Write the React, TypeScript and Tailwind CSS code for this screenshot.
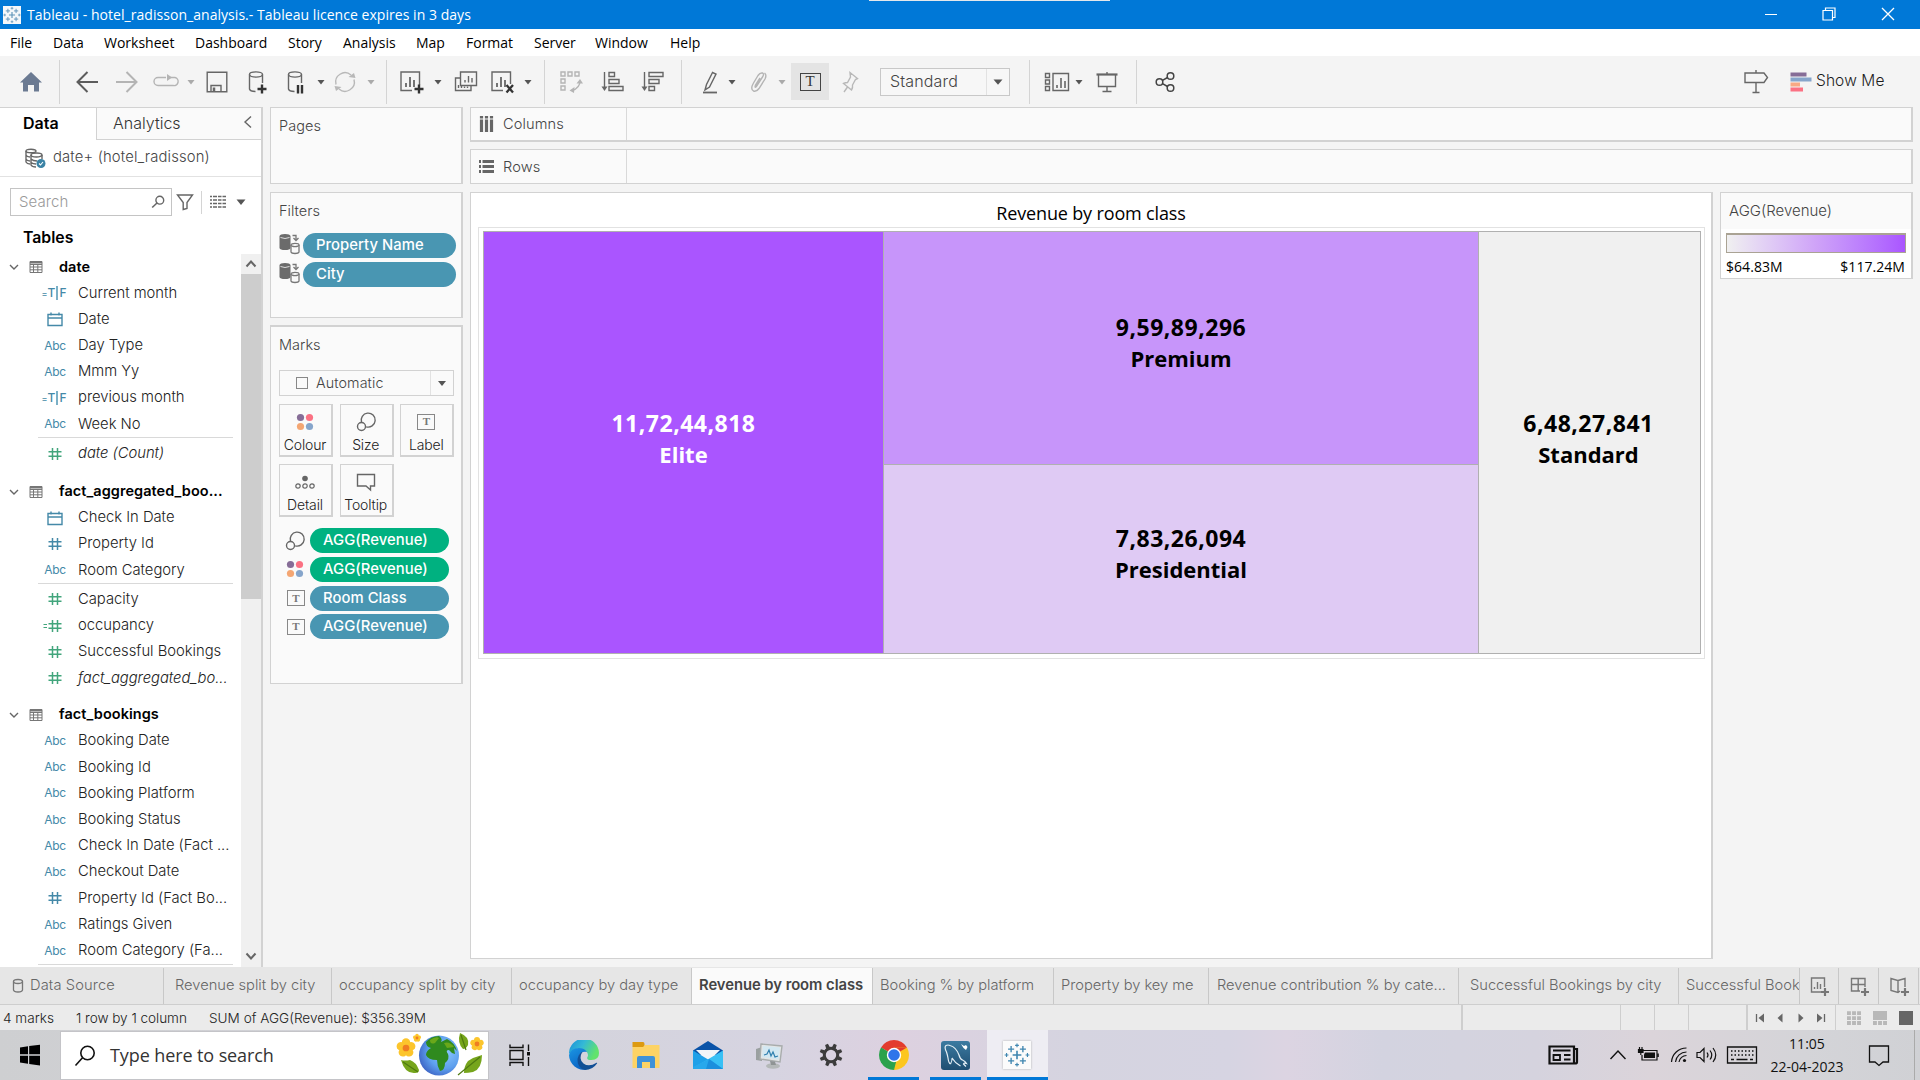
import React from 'react';

type IconProps = { s?: number; c?: string; w?: number; className?: string; children: React.ReactNode };

/* Drawing surface whose origin is the centre of the icon. */
function Ic({ s = 24, c = '#666', w = 1.4, className = '', children }: IconProps) {
  return (
    <svg width={s} height={s} viewBox={`${-s / 2} ${-s / 2} ${s} ${s}`} fill="none" stroke={c} strokeWidth={w} className={'block shrink-0 overflow-visible ' + className}>
      {children}
    </svg>
  );
}

function Tri({ c = '#555' }: { c?: string }) {
  return (
    <Ic s={8}>
      <path d="M-3.5 -2H3.5L0 2.6z" fill={c} stroke="none" />
    </Ic>
  );
}

function Cell({ className, children }: { className: string; children: React.ReactNode }) {
  return <div className={'flex h-full shrink-0 items-center justify-center ' + className}>{children}</div>;
}

function Sep({ className = '' }: { className?: string }) {
  return <div className={'h-[44px] w-px shrink-0 bg-[#d4d4d4] ' + className} />;
}

function Plus({ x, y, r, c, w }: { x: number; y: number; r: number; c: string; w: number }) {
  return <path d={`M${x - r} ${y}H${x + r}M${x} ${y - r}V${y + r}`} stroke={c} strokeWidth={w} />;
}

function TableauMark({ k, c }: { k: number; c: string }) {
  return (
    <g>
      <Plus x={0} y={0} r={4.6 * k} c={c} w={1.7 * k} />
      <Plus x={-6.2 * k} y={-6.2 * k} r={3.2 * k} c={c} w={1.4 * k} />
      <Plus x={6.2 * k} y={-6.2 * k} r={3.2 * k} c={c} w={1.4 * k} />
      <Plus x={-6.2 * k} y={6.2 * k} r={3.2 * k} c={c} w={1.4 * k} />
      <Plus x={6.2 * k} y={6.2 * k} r={3.2 * k} c={c} w={1.4 * k} />
      <Plus x={0} y={-10.2 * k} r={2 * k} c={c} w={1.2 * k} />
      <Plus x={0} y={10.2 * k} r={2 * k} c={c} w={1.2 * k} />
      <Plus x={-11 * k} y={0} r={2 * k} c={c} w={1.2 * k} />
      <Plus x={11 * k} y={0} r={2 * k} c={c} w={1.2 * k} />
    </g>
  );
}

const menus = [
  ['File', 'w-[43px]'],
  ['Data', 'w-[51px]'],
  ['Worksheet', 'w-[91px]'],
  ['Dashboard', 'w-[93px]'],
  ['Story', 'w-[55px]'],
  ['Analysis', 'w-[73px]'],
  ['Map', 'w-[50px]'],
  ['Format', 'w-[68px]'],
  ['Server', 'w-[61px]'],
  ['Window', 'w-[75px]'],
  ['Help', 'w-[40px]'],
];

function TitleBar() {
  return (
    <header className="flex h-[29px] items-center bg-[#0078d7] text-white">
      <div className="ml-[3px] flex h-[18px] w-[18px] items-center justify-center bg-[#f4f7fa]">
        <Ic s={18}>
          <TableauMark k={0.66} c="#5d93b8" />
        </Ic>
      </div>
      <span className="-mt-[1px] ml-[6px] w-[445px] whitespace-nowrap text-[14px] tracking-[0.04px]">Tableau - hotel_radisson_analysis.- Tableau licence expires in 3 days</span>
      <div className="ml-[397px] h-px w-[241px] self-start bg-[#e4e8ec]" />
      <div className="ml-auto flex items-center pb-[2px] pr-[25px]">
        <Ic s={14} c="#fff" w={1} className="mr-[44px]">
          <path d="M-6 .5H6" />
        </Ic>
        <Ic s={14} c="#fff" w={1.2} className="mr-[45px]">
          <path d="M-6 -3.5H3.5V6H-6zM-3.5 -4V-6H6V3.5H4" />
        </Ic>
        <Ic s={14} c="#fff" w={1.3}>
          <path d="M-6 -6L6 6M6 -6L-6 6" />
        </Ic>
      </div>
    </header>
  );
}

function Bars() {
  return <path d="M-4 5V1M0 5V-5M4 5V-2" strokeWidth={1.8} />;
}

function Toolbar() {
  return (
    <div className="flex h-[51px] items-center">
      <Cell className="w-[61px]">
        <Ic>
          <path d="M-11 .5L0 -10L11 .5H8V9.5H3V3H-3V9.5H-8V.5z" fill="#6b7a92" stroke="none" />
        </Ic>
      </Cell>
      <Sep className="-ml-[2px]" />
      <Cell className="ml-[7px] w-[40px]">
        <Ic c="#5c5c5c" w={2}>
          <path d="M11 0H-9.5M.5 -10L-9.5 0L.5 10" />
        </Ic>
      </Cell>
      <Cell className="w-[40px]">
        <Ic c="#b4b4b4" w={2}>
          <path d="M-11 0H9.5M-.5 -10L9.5 0L-.5 10" />
        </Ic>
      </Cell>
      <Cell className="w-[36px]">
        <Ic c="#b4b4b4">
          <path d="M1 -4.5H-7A4 4 0 0 0 -7 3.5H8A4 4 0 0 0 10 -4.5H2" />
          <path d="M2 -8L7 -4.5L2 -1z" fill="#b4b4b4" stroke="none" />
        </Ic>
      </Cell>
      <Cell className="w-[16px]"><Tri c="#aaa" /></Cell>
      <Cell className="w-[36px]">
        <Ic>
          <path d="M-9.8 -9.8H9.8V9.8H-9.8zM-6 9.5V3.5H4V9.5" />
          <path d="M-3 5.5V9.5" strokeWidth={2.5} />
        </Ic>
      </Cell>
      <Cell className="ml-[2px] w-[40px]">
        <Ic>
          <ellipse cx="-1" cy="-7.5" rx="6.5" ry="2.6" />
          <path d="M-7.5 -7.5V7Q-7 9.5 -1.5 9.5M5.5 -7.5V1" />
          <path d="M5 2.5V11.5M.5 7H9.5" stroke="#333" strokeWidth={2.4} />
        </Ic>
      </Cell>
      <Cell className="w-[38px]">
        <Ic>
          <ellipse cx="-1" cy="-7.5" rx="6.5" ry="2.6" />
          <path d="M-7.5 -7.5V7Q-7 9.5 -1.5 9.5M5.5 -7.5V1" />
          <path d="M2 3V11.5M6 3V11.5" stroke="#333" strokeWidth={2.4} />
        </Ic>
      </Cell>
      <Cell className="w-[12px]"><Tri /></Cell>
      <Cell className="w-[36px]">
        <Ic c="#b8b8b8">
          <path d="M-9 2.5A9.3 9.3 0 0 1 6 -7M9 -2.5A9.3 9.3 0 0 1 -6 7" />
          <path d="M10.5 -4L3.5 -5L9 -9zM-10.5 4L-3.5 5L-9 9z" fill="#b8b8b8" stroke="none" />
        </Ic>
      </Cell>
      <Cell className="w-[16px]"><Tri c="#aaa" /></Cell>
      <Sep className="ml-[7px]" />
      <Cell className="ml-[4px] w-[40px]">
        <Ic>
          <path d="M1 8.5H-10V-10H8.5V3" />
          <g transform="translate(-1 0)"><Bars /></g>
          <path d="M8 2.5V11.5M3.5 7H12.5" stroke="#333" strokeWidth={2.4} />
        </Ic>
      </Cell>
      <Cell className="w-[14px]"><Tri /></Cell>
      <Cell className="ml-px w-[40px]">
        <Ic>
          <path d="M-5.5 -10H10.5V3.5H-5.5zM-6 -4H-10.5V8.5H5V4" />
          <path d="M-1 .5V-2M2.5 .5V-6M6 .5V-4M-7.5 6V3M-4.5 6V3M-1.5 6V4.5M1.5 6V4.5" />
        </Ic>
      </Cell>
      <Cell className="w-[32px]">
        <Ic>
          <path d="M1 8.5H-10V-10H8.5V2" />
          <g transform="translate(-1 0)"><Bars /></g>
          <path d="M4.5 3L11 10.5M11 3L4.5 10.5" stroke="#333" strokeWidth={2.3} />
        </Ic>
      </Cell>
      <Cell className="ml-[2px] w-[16px]"><Tri /></Cell>
      <Sep className="ml-[8px]" />
      <Cell className="ml-[6px] w-[40px]">
        <Ic c="#b4b4b4">
          <path d="M-10 -10h4v4h-4zM-3 -10h4v4h-4zM4 -10h4v4h-4zM-10 -3h4v4h-4zM-10 4h4v4h-4zM9 -1Q9 6 1 8.5" />
          <path d="M5.5 1.5L9 -3L12 1.5zM3.5 5L-1.5 8.5L3 11z" fill="#b4b4b4" stroke="none" />
        </Ic>
      </Cell>
      <Cell className="ml-[2px] w-[40px]">
        <Ic>
          <path d="M-8.5 -10V6" />
          <path d="M-11.5 4.5L-8.5 9L-5.5 4.5z" fill="#666" stroke="none" />
          <path d="M-4 -9.5h5.5v4h-5.5zM-4 -2.5h10v4h-10zM-4 4.5h14v4h-14z" />
        </Ic>
      </Cell>
      <Cell className="w-[40px]">
        <Ic>
          <path d="M-8.5 -10V6" />
          <path d="M-11.5 4.5L-8.5 9L-5.5 4.5z" fill="#666" stroke="none" />
          <path d="M-4 -9.5h14v4h-14zM-4 -2.5h10v4h-10zM-4 4.5h5.5v4h-5.5z" />
        </Ic>
      </Cell>
      <Sep className="ml-[8px]" />
      <Cell className="ml-[10px] w-[36px]">
        <Ic>
          <path d="M2.5 -9.5L-3.5 2.5L-5 8L-.5 5L6 -8zM-5 8L-4 5" />
          <path d="M-7 10.5H7" strokeWidth={1.8} />
        </Ic>
      </Cell>
      <Cell className="w-[8px]"><Tri /></Cell>
      <Cell className="ml-[5px] w-[36px]">
        <Ic c="#b4b4b4">
          <path d="M-3 5L3.5 -5Q5.5 -8 3.5 -9Q1 -9.5 -1 -6.5L-5.5 1Q-9 7 -5.5 9Q-2.5 10 0 6.5L6 -3Q8 -7 5.5 -9M-3 5Q-4.5 6 -3.5 3L1 -4" />
        </Ic>
      </Cell>
      <Cell className="w-[10px]"><Tri c="#aaa" /></Cell>
      <div className="ml-[4px] flex h-[37px] w-[38px] shrink-0 items-center justify-center bg-[#e4e4e4]">
        <div className="flex h-[18px] w-[21px] items-center justify-center border-[1.5px] border-[#444] font-['Liberation_Serif'] text-[15px] leading-none text-[#333]">T</div>
      </div>
      <Cell className="w-[42px]">
        <Ic c="#b8b8b8">
          <path d="M0 -9.5L7.5 -3.5L5.5 -2.5L2.5 3Q3 6 1.5 8L-6.5 1.5Q-4.5 .5 -2.5 .5L.5 -5zM-2.5 5L-6 10" />
        </Ic>
      </Cell>
      <div className="ml-[9px] flex h-[28px] w-[130px] shrink-0 items-center border border-[#c8c8c8] bg-[#f7f7f7]">
        <span className="-mt-[1px] ml-[9px] w-[96px] text-[16px] tracking-[0.15px] text-[#444]">Standard</span>
        <div className="flex h-full w-[22px] items-center justify-center border-l border-[#e2e2e2]"><Ic s={8}><path d="M-4.5 -2.5H4.5L0 2.8z" fill="#555" stroke="none" /></Ic></div>
      </div>
      <Sep className="ml-[19px]" />
      <Cell className="ml-[9px] w-[36px]">
        <Ic>
          <path d="M-11.5 -8.5h4v4h-4zM-11.5 -2h4v4h-4zM-11.5 4.5h4v4h-4zM-4 -8.5H11.5V8.5H-4z" />
          <path d="M0 6V3M4 6V-4M8 6V-1" strokeWidth={1.6} />
        </Ic>
      </Cell>
      <Cell className="w-[8px]"><Tri /></Cell>
      <Cell className="ml-[4px] w-[40px]">
        <Ic>
          <path d="M-10.5 -7.5H10.5" strokeWidth={2.2} />
          <path d="M-8.5 -7V4.5H8.5V-7M0 -10V-8M0 4.5V9.5M-4.5 9.5H4.5" />
        </Ic>
      </Cell>
      <Sep className="ml-[9px]" />
      <Cell className="ml-[8px] w-[40px]">
        <Ic c="#444" w={1.5}>
          <circle cx="-5.5" cy="0" r="3.3" />
          <circle cx="5.5" cy="-6" r="3.3" />
          <circle cx="5.5" cy="6" r="3.3" />
          <path d="M-2.5 -1.6L2.5 -4.5M-2.5 1.6L2.5 4.5" />
        </Ic>
      </Cell>
      <div className="ml-auto flex items-center pr-[33px]">
        <Ic s={24} className="mr-[22px]">
          <path d="M-11 -9H8L11.5 -4.5L8 .5H-11zM0 -12V-9M0 .5V10.5M-3.5 10.5H3.5" />
        </Ic>
        <Ic s={22} className="mr-[5px]">
          <g stroke="none">
            <rect x="-10.5" y="-9.5" width="16" height="4" fill="#866d97" />
            <rect x="-10.5" y="-4.5" width="21" height="4" fill="#86a5cb" />
            <rect x="-10.5" y=".5" width="9.5" height="4" fill="#f8a984" />
            <rect x="-10.5" y="5.5" width="12.5" height="4" fill="#fb7183" />
          </g>
        </Ic>
        <span className="-ml-px -mt-[1px] w-[71px] whitespace-nowrap text-[15.5px] tracking-[0.1px] text-[#1c1c1c]">Show Me</span>
      </div>
    </div>
  );
}

type Kind = 'abc' | 'tf' | 'cal' | 'num' | 'gnum' | 'egnum';

function FieldIcon({ kind }: { kind: Kind }) {
  if (kind === 'abc') return <span className="text-[12px] font-normal tracking-[-0.3px] text-[#4489a8]">Abc</span>;
  if (kind === 'tf')
    return (
      <span className="-ml-[2px] flex items-center text-[12px] font-medium leading-none text-[#4489a8]">
        <span className="text-[9px]">=</span>T<span className="mx-px h-[14px] w-[2px] bg-[#7bb0c6]" />F
      </span>
    );
  if (kind === 'cal')
    return (
      <Ic s={18} c="#4489a8">
        <path d="M-7 -4.5H7V6.5H-7zM-7 -1H7M-4 -6.5V-3.5M4 -6.5V-3.5" />
      </Ic>
    );
  const c = kind === 'num' ? '#4489a8' : '#42a57c';
  return (
    <Ic s={18} c={c} w={1.5}>
      <path d="M-2.5 -6V6M2.5 -6V6M-6.5 -2.2H6.5M-6.5 2.2H6.5" />
      {kind === 'egnum' && <path d="M-11.5 -1.5H-8M-11.5 1.5H-8" strokeWidth={1.2} />}
    </Ic>
  );
}

type Row = { k: Kind; t: string; i?: boolean };

function FieldRow({ k, t, i }: Row) {
  return (
    <div className="flex h-[26.24px] items-center">
      <div className="ml-[30px] flex w-[50px] items-center justify-center">
        <FieldIcon kind={k} />
      </div>
      <span className={'-mt-[1px] ml-[-2px] whitespace-nowrap text-[14.8px] tracking-[-0.02px] text-[#222] ' + (i ? 'italic' : '')}>{t}</span>
    </div>
  );
}

function GroupHead({ t }: { t: string }) {
  return (
    <div className="flex h-[26px] items-center">
      <Ic s={10} c="#666" className="ml-[9px]">
        <path d="M-4 -2L0 2L4 -2" />
      </Ic>
      <Ic s={14} c="#777" w={1} className="ml-[10px]">
        <path d="M-6 -5.5H6V5.5H-6zM-6 -2.5H6M-6 0H6M-6 2.8H6M-2.5 -2.5V5.5M1.8 -2.5V5.5" />
        <path d="M-6 -4.5H6" strokeWidth={2} />
      </Ic>
      <span className="-mt-[1px] ml-[16px] whitespace-nowrap text-[14.5px] font-semibold tracking-[0.05px] text-black">{t}</span>
    </div>
  );
}

const Line = () => <div className="mb-[2px] ml-[38px] h-px w-[195px] bg-[#d9d9d9]" />;

function DataPane() {
  return (
    <aside className="flex w-[263px] shrink-0 flex-col border-r-2 border-t border-[#d2d2d2] bg-white">
      <div className="flex h-[32px] shrink-0">
        <div className="w-[96px] pl-[23px] pt-[3px] text-[16px] font-semibold text-black">Data</div>
        <div className="flex grow justify-between border-b border-l border-[#d2d2d2] bg-[#fafafa] pl-[16px] pr-[8px] pt-[3px] text-[16px] text-[#333]">
          Analytics
          <Ic s={10} className="mt-[6px]">
            <path d="M3 -5.5L-3 0L3 5.5" />
          </Ic>
        </div>
      </div>
      <div className="flex h-[37px] shrink-0 items-center border-b border-[#e2e2e2] pl-[25px]">
        <Ic s={20}>
          <ellipse cx="-4" cy="-7" rx="5" ry="1.8" />
          <path d="M-9 -7V4Q-8 6 -5 6M-9 -3Q-8 -1 -5 -1M-9 1Q-8 3 -5 3" />
          <ellipse cx="1.5" cy="-3" rx="5.5" ry="2" fill="#fff" />
          <path d="M-4 -3V7Q-3 9 1 9M7 -3V1M-4 1Q-2 3 2 3M-4 4.5Q-2 6 1 6" />
          <circle cx="6" cy="5.5" r="4.5" fill="#3b83a5" stroke="none" />
          <path d="M4 5.5L5.5 7L8 4" stroke="#fff" strokeWidth={1.1} />
        </Ic>
        <span className="-mt-[1px] ml-[8px] text-[14.8px] tracking-[0.15px] text-[#444]">date+ (hotel_radisson)</span>
      </div>
      <div className="mt-[11px] flex h-[28px] shrink-0 items-center">
        <div className="ml-[10px] flex h-[28px] w-[162px] items-center justify-between border border-[#c4c4c4] bg-white pl-[8px] pr-[7px]">
          <span className="text-[15px] tracking-[0.1px] text-[#9a9a9a]">Search</span>
          <Ic s={12}>
            <circle cx="1.8" cy="-1.8" r="3.9" />
            <path d="M-1 1L-5.8 5.5" strokeWidth={1.6} />
          </Ic>
        </div>
        <Ic s={16} className="ml-[5px]">
          <path d="M-7.5 -7H7.5L2 .5V6.5L-1.8 7.5V.5z" />
        </Ic>
        <div className="ml-[8px] h-[23px] w-px bg-[#d4d4d4]" />
        <Ic s={16} w={1.6} className="ml-[8px]">
          <path d="M-8 -5.5H-6M-5 -5.5H-1M0 -5.5H3.5M4.500 -5.5H8M-8 -2H-6M-5 -2H-1M0 -2H3.5M4.5 -2H8M-8 1.5H-6M-5 1.5H-1M0 1.5H3.5M4.5 1.5H8M-8 5H-6M-5 5H-1M0 5H3.5M4.5 5H8" />
        </Ic>
        <Ic s={10} className="ml-[10px]">
          <path d="M-4.5 -2.5H4.5L0 3z" fill="#555" stroke="none" />
        </Ic>
      </div>
      <div className="mt-[11px] h-[22px] shrink-0 pl-[23px] text-[15.8px] font-semibold leading-[22px] text-black">Tables</div>
      <div className="flex grow overflow-hidden pt-[5px]">
        <div className="w-[241px] shrink-0">
          <GroupHead t="date" />
          <FieldRow k="tf" t="Current month" />
          <FieldRow k="cal" t="Date" />
          <FieldRow k="abc" t="Day Type" />
          <FieldRow k="abc" t="Mmm Yy" />
          <FieldRow k="tf" t="previous month" />
          <FieldRow k="abc" t="Week No" />
          <Line />
          <FieldRow k="gnum" t="date (Count)" i />
          <div className="h-[12px]" />
          <GroupHead t="fact_aggregated_boo..." />
          <FieldRow k="cal" t="Check In Date" />
          <FieldRow k="num" t="Property Id" />
          <FieldRow k="abc" t="Room Category" />
          <Line />
          <FieldRow k="gnum" t="Capacity" />
          <FieldRow k="egnum" t="occupancy" />
          <FieldRow k="gnum" t="Successful Bookings" />
          <FieldRow k="gnum" t="fact_aggregated_bo..." i />
          <div className="h-[10.5px]" />
          <GroupHead t="fact_bookings" />
          <FieldRow k="abc" t="Booking Date" />
          <FieldRow k="abc" t="Booking Id" />
          <FieldRow k="abc" t="Booking Platform" />
          <FieldRow k="abc" t="Booking Status" />
          <FieldRow k="abc" t="Check In Date (Fact ..." />
          <FieldRow k="abc" t="Checkout Date" />
          <FieldRow k="num" t="Property Id (Fact Bo..." />
          <FieldRow k="abc" t="Ratings Given" />
          <FieldRow k="abc" t="Room Category (Fa..." />
          <Line />
        </div>
        <div className="flex grow flex-col items-center bg-[#f0f0f0]">
          <Ic s={20} w={2}>
            <path d="M-4.5 2.5L0 -2.5L4.5 2.5" />
          </Ic>
          <div className="h-[325px] w-full bg-[#cdcdcd]" />
          <Ic s={20} w={2} className="mt-auto">
            <path d="M-4.5 -3.5L0 1.5L4.5 -3.5" />
          </Ic>
        </div>
      </div>
    </aside>
  );
}

function SizeIcon() {
  return (
    <Ic s={20}>
      <path d="M-4.5 .2A7 7 0 1 1 .2 4.800" />
      <circle cx="-4.5" cy="4.5" r="4" />
    </Ic>
  );
}
function ColourIcon() {
  return (
    <Ic s={20}>
      <g stroke="none">
        <circle cx="-4.5" cy="-4.5" r="3.6" fill="#866d97" />
        <circle cx="4.5" cy="-4.5" r="3.6" fill="#fb7183" />
        <circle cx="-4.5" cy="4.5" r="3.6" fill="#f4a673" />
        <circle cx="4.5" cy="4.5" r="3.6" fill="#86a5cb" />
      </g>
    </Ic>
  );
}
function LabelIcon() {
  return (
    <div className="flex h-[16px] w-[18px] shrink-0 items-center justify-center border-[1.5px] border-[#888] font-['Liberation_Serif'] text-[11px] font-bold leading-none text-[#777]">T</div>
  );
}

function MarkButton({ label, children }: { label: string; children: React.ReactNode }) {
  return (
    <div className="flex h-[53px] w-[54px] flex-col items-center border border-b-2 border-r-2 border-[#d2d2d2] pr-px text-[14px] text-[#222]">
      <div className="flex h-[34px] items-center">{children}</div>
      <span className="-mt-[4px] tracking-[-0.15px]">{label}</span>
    </div>
  );
}

function Pill({ t, green }: { t: string; green?: boolean }) {
  return (
    <div className={'flex h-[25px] grow items-center rounded-full pl-[13px] text-[14.8px] font-medium text-white ' + (green ? 'bg-[#00b180]' : 'bg-[#4996b2]')}>
      <span className="tracking-[0.06px]">{t}</span>
    </div>
  );
}

function DbIcon() {
  return (
    <Ic s={22} c="#777" w={1.3}>
      <path d="M-10.5 -8V4Q-10 6 -5 6T.5 4V-8Q0 -10 -5 -10T-10.5 -8z" fill="#6b6b6b" stroke="none" />
      <path d="M-9.5 -6.5Q-5 -4.5 -.5 -6.5" stroke="#ddd" strokeWidth={1} />
      <path d="M1 1V8Q1.5 9.5 5 9.5T9 8V1" fill="#fafafa" />
      <ellipse cx="5" cy="1" rx="4" ry="1.6" fill="#fafafa" />
      <path d="M2.5 -8.5H6V-5M3.5 -6L6 -3.5L8.5 -6" />
    </Ic>
  );
}

function Cards() {
  return (
    <div className="ml-[7px] flex w-[193px] shrink-0 flex-col text-[14.5px] leading-[21px] text-[#444]">
      <section className="h-[77px] border border-r-2 border-[#d2d2d2] bg-[#fafafa] pl-[8px] pt-[7px] tracking-[0.1px]">Pages</section>
      <section className="mt-[8px] h-[126px] border border-r-2 border-[#d2d2d2] bg-[#fafafa] pl-[8px] pt-[7px]">
        Filters
        <div className="mt-[12px] flex gap-[2px] pr-[5px]">
          <DbIcon />
          <Pill t="Property Name" />
        </div>
        <div className="mt-[4px] flex gap-[2px] pr-[5px]">
          <DbIcon />
          <Pill t="City" />
        </div>
      </section>
      <section className="mt-[7px] h-[359px] border border-r-2 border-t-2 border-[#d2d2d2] bg-[#fafafa] pl-[8px] pt-[7px]">
        Marks
        <div className="mt-[15px] flex h-[26px] w-[175px] items-center border border-[#d2d2d2]">
          <div className="ml-[16px] h-[12px] w-[12px] border-[1.5px] border-[#888]" />
          <span className="-mt-[2px] ml-[8px] grow text-[14.3px] tracking-[0.1px]">Automatic</span>
          <div className="flex h-full w-[23px] items-center justify-center border-l border-[#e2e2e2]"><Ic s={8}><path d="M-4 -2H4L0 3z" fill="#555" stroke="none" /></Ic></div>
        </div>
        <div className="mt-[8px] grid w-[175px] grid-cols-3 gap-x-[7px] gap-y-[7px]">
          <MarkButton label="Colour"><ColourIcon /></MarkButton>
          <MarkButton label="Size"><SizeIcon /></MarkButton>
          <MarkButton label="Label"><LabelIcon /></MarkButton>
          <MarkButton label="Detail">
            <Ic s={20} w={1.2}>
              <circle cx="0" cy="-3.5" r="2.8" fill="#666" stroke="none" />
              <circle cx="-7" cy="4" r="2.2" />
              <circle cx="0" cy="4" r="2.2" />
              <circle cx="7" cy="4" r="2.2" />
            </Ic>
          </MarkButton>
          <MarkButton label="Tooltip">
            <Ic s={20}>
              <path d="M-8.5 -7.5H8.5V4H4.5V8L0 4H-8.5z" />
            </Ic>
          </MarkButton>
        </div>
        <div className="mt-[11px] flex w-[170px] flex-col gap-[3.8px] pl-[6px]">
          <div className="flex items-center gap-[5px]"><SizeIcon /><Pill t="AGG(Revenue)" green /></div>
          <div className="flex items-center gap-[5px]"><ColourIcon /><Pill t="AGG(Revenue)" green /></div>
          <div className="flex items-center gap-[5px] pl-[2px]"><LabelIcon /><Pill t="Room Class" /></div>
          <div className="flex items-center gap-[5px] pl-[2px]"><LabelIcon /><Pill t="AGG(Revenue)" /></div>
        </div>
      </section>
    </div>
  );
}

function Shelf({ label, className, children }: { label: string; className: string; children: React.ReactNode }) {
  return (
    <div className={'flex border border-r-2 border-[#d2d2d2] bg-[#fafafa] text-[14.6px] text-[#444] ' + className}>
      <div className="flex w-[156px] items-center border-r border-[#d9d9d9] pl-[7px]">
        {children}
        <span className="ml-[9px] mt-[2px] tracking-[0.1px]">{label}</span>
      </div>
    </div>
  );
}

function Mark({ value, name, className }: { value: string; name: string; className: string }) {
  return (
    <div className={'flex flex-col items-center justify-center font-["Open_Sans"] text-[22px] font-bold leading-[31px] ' + className}>
      <span className="text-[23px] tracking-[0.5px]">{value}</span>
      <span>{name}</span>
    </div>
  );
}

function Workspace() {
  return (
    <div className="ml-[7px] flex w-[1443px] shrink-0 flex-col">
      <Shelf label="Columns" className="h-[35px] border-b-2">
        <Ic s={16}>
          <path d="M-4.5 -4.5V8M.5 -4.5V8M5.5 -4.5V8" strokeWidth={3.2} />
          <path d="M-6.1 -6.8h3.2M-1.1 -6.8h3.2M3.9 -6.8h3.2" strokeWidth={2.4} />
        </Ic>
      </Shelf>
      <Shelf label="Rows" className="mt-[7px] h-[35px]">
        <Ic s={16}>
          <path d="M-3.5 -5.5H8M-3.5 -.5H8M-3.5 4.5H8" strokeWidth={2.8} />
          <path d="M-7 -5.5H-5M-7 -.5H-5M-7 4.5H-5" strokeWidth={2.8} />
        </Ic>
      </Shelf>
      <div className="mt-[8px] flex h-[767px] items-start justify-between">
        <section className="flex h-full w-[1243px] flex-col border border-r-2 border-[#d2d2d2] bg-white">
          <h1 className="h-[34px] text-center font-['Open_Sans'] text-[18px] font-normal leading-[41px] tracking-[-0.15px] text-black">Revenue by room class</h1>
          <div className="ml-[7px] h-[432px] w-[1227px] border border-[#e2e2e2] p-[3px] pb-[4px] pl-[4px]">
            <div className="flex h-full border border-[#b0b0b0]">
              <Mark value="11,72,44,818" name="Elite" className="w-[399px] bg-[#aa55ff] pb-[8px] text-white" />
              <div className="flex w-[596px] flex-col border-x border-[#b0b0b0] text-black">
                <Mark value="9,59,89,296" name="Premium" className="h-[233px] border-b border-[#b0b0b0] bg-[#c795fa] pb-[10px]" />
                <Mark value="7,83,26,094" name="Presidential" className="grow bg-[#dfcaf4] pb-[11px]" />
              </div>
              <Mark value="6,48,27,841" name="Standard" className="grow bg-[#f0f0f0] pb-[8px] pr-[2px] text-black" />
            </div>
          </div>
        </section>
        <section className="h-[87px] w-[193px] border border-r-2 border-[#d2d2d2] bg-white text-[15px]">
          <div className="h-[36px] bg-[#fafafa] pl-[8px] pt-[7px] text-[#444]">AGG(Revenue)</div>
          <div className="ml-[5px] mt-[4px] h-[20px] w-[180px] border border-t-2 border-[#aaa394] bg-gradient-to-r from-[#f0f0f0] via-[#cfa3f8] to-[#aa55ff]" />
          <div className="flex justify-between pl-[5px] pr-[6px] pt-[3px] font-['Open_Sans'] text-[14px] font-normal tracking-[0.05px] text-black">
            <span>$64.83M</span>
            <span>$117.24M</span>
          </div>
        </section>
      </div>
    </div>
  );
}

const sheets = [
  ['Revenue split by city', 'w-[168px] pl-[11px]'],
  ['occupancy split by city', 'w-[180px] pl-[7px]'],
  ['occupancy by day type', 'w-[180px] pl-[7px]'],
  ['Revenue by room class', 'w-[181px] pl-[7px]'],
  ['Booking % by platform', 'w-[181px] pl-[7px]'],
  ['Property by key me', 'w-[155px] pl-[7px]'],
  ['Revenue contribution % by cate...', 'w-[250px] pl-[8px]'],
  ['Successful Bookings by city', 'w-[220px] pl-[11px]'],
  ['Successful Book', 'w-[121px] pl-[7px] overflow-hidden'],
];

function SheetTabs() {
  return (
    <div className="flex h-[38px] border-b border-[#cecece] bg-[#e6e6e6] pt-px text-[14.7px] text-[#666]">
      <div className="flex w-[164px] shrink-0 items-center border-r border-[#c8c8c8] pb-px pl-[11px]">
        <Ic s={14} c="#777" w={1.3}>
          <ellipse cx="0" cy="-4.5" rx="4.5" ry="2" />
          <path d="M-4.5 -4.5V4Q-4 6 0 6T4.5 4V-4.5" />
        </Ic>
        <span className="ml-[5px] tracking-[0.1px]">Data Source</span>
      </div>
      {sheets.map(([t, cls], i) => (
        <div key={t} className={'flex shrink-0 items-center whitespace-nowrap border-r border-[#c8c8c8] ' + cls + (i === 3 ? ' bg-[#fafafa] pb-[2px] text-[14.8px] font-semibold tracking-[-0.04px] text-[#444]' : ' pb-px tracking-[-0.02px]')}>
          {t}
        </div>
      ))}
      <div className="flex w-[39px] shrink-0 items-center justify-center border-r border-[#c8c8c8]">
        <Ic s={18} c="#777">
          <path d="M2 6H-7.5V-8H5.5V1M-4.5 3V1M-1.5 3V-4M1.5 3V-2" />
          <path d="M6 2V10M2 6H10" strokeWidth={2.2} />
        </Ic>
      </div>
      <div className="flex w-[40px] shrink-0 items-center justify-center border-r border-[#c8c8c8]">
        <Ic s={18} c="#777">
          <path d="M1 5H-7.5V-7.5H6V1M-.8 -7.5V5M-7.5 -1.5H6" />
          <path d="M6 2V10M2 6H10" strokeWidth={2.2} />
        </Ic>
      </div>
      <div className="flex w-[40px] shrink-0 items-center justify-center border-r border-[#c8c8c8]">
        <Ic s={18} c="#777">
          <path d="M1 5L-1 6.5L-8 4.5V-7.5L-1 -5.5V6.5M-1 -5.5L6 -7.5V1" />
          <path d="M6 2V10M2 6H10" strokeWidth={2.2} />
        </Ic>
      </div>
    </div>
  );
}

function StatusBar() {
  return (
    <div className="flex h-[25px] shrink-0 items-center bg-[#ebebeb] text-[13.6px] text-[#222]">
      <span className="mt-px w-[72px] pl-[3px]">4 marks</span>
      <span className="mt-px w-[133px] whitespace-nowrap pl-[4px] tracking-[-0.05px]">1 row by 1 column</span>
      <span className="mt-px pl-[4px]">SUM of AGG(Revenue): $356.39M</span>
      <div className="ml-auto flex h-full shrink-0">
        <div className="w-[159px] border-l-2 border-[#cecece]" />
        <div className="w-[34px] border-l border-[#cecece]" />
        <div className="w-[34px] border-l border-[#cecece]" />
        <div className="w-[58px] border-l border-[#cecece]" />
        <div className="flex w-[89px] items-center justify-between border-l-2 border-[#cecece] pl-[8px] pr-[10px]">
          <Ic s={8}><path d="M-3.5 -4V4" strokeWidth={1.3} /><path d="M4 -4.5L-1.5 0L4 4.5z" fill="#666" stroke="none" /></Ic>
          <Ic s={8}><path d="M2.5 -4.5L-2.5 0L2.5 4.5z" fill="#666" stroke="none" /></Ic>
          <Ic s={8}><path d="M-2.5 -4.5L2.5 0L-2.5 4.5z" fill="#666" stroke="none" /></Ic>
          <Ic s={8}><path d="M3.5 -4V4" strokeWidth={1.3} /><path d="M-4 -4.5L1.5 0L-4 4.5z" fill="#666" stroke="none" /></Ic>
        </div>
        <div className="flex w-[85px] items-center justify-between border-l border-[#cecece] pl-[11px] pr-[7px]">
          <Ic s={14} c="#b8b8b8"><path d="M-7 -4.8H7M-7 .2H7M-7 5H7" strokeWidth={3.8} strokeDasharray="3.9 1.15" /></Ic>
          <Ic s={14} c="#b8b8b8"><rect x="-7" y="-7" width="14" height="9" fill="#b8b8b8" stroke="none" /><path d="M-7 5H7" strokeWidth={3.8} strokeDasharray="3.9 1.15" /></Ic>
          <Ic s={14}><rect x="-7" y="-7" width="14" height="14" fill="#666" stroke="none" /></Ic>
        </div>
      </div>
    </div>
  );
}

function Flower({ x, y, k }: { x: number; y: number; k: number }) {
  return (
    <g transform={`translate(${x} ${y}) scale(${k})`} stroke="none">
      {[0, 72, 144, 216, 288].map((a) => (
        <circle key={a} cx="0" cy="-5.2" r="4" fill="#fcc52c" transform={`rotate(${a})`} />
      ))}
      <circle r="3.2" fill="#ef7d22" />
    </g>
  );
}

function EarthDay() {
  return (
    <svg width="88" height="46" viewBox="0 0 88 46" className="block overflow-visible">
      <defs>
        <radialGradient id="sea" cx=".65" cy=".4" r=".7">
          <stop offset="0" stopColor="#8cc8ff" />
          <stop offset=".6" stopColor="#5ea0ee" />
          <stop offset="1" stopColor="#3c62c4" />
        </radialGradient>
      </defs>
      <path d="M4 27Q8 28 13 27Q19 29 22 37Q22 40 18 40Q8 41 4 27z" fill="#76a51c" />
      <path d="M63 0Q73 4 71 12Q69 16 66 16Q60 10 63 0z" fill="#76a51c" />
      <path d="M85 22Q85 36 76 39Q71 40 67 40Q67 33 71 28Q77 24 85 22z" fill="#76a51c" />
      <path d="M83 24Q73 32 61 42M6 29L21 39M64 2L69 17" stroke="#4f7a10" strokeWidth="1.2" fill="none" />
      <Flower x={9} y={15} k={1.05} />
      <Flower x={20} y={5} k={0.45} />
      <Flower x={80} y={11} k={0.75} />
      <circle cx="42" cy="22.5" r="20" fill="url(#sea)" />
      <path d="M29 9Q34 3 42 3Q46 6 44 9L50 6Q58 10 60 18L57 15L58 21Q54 20 52 17Q48 17 51 21Q53 26 48 30Q48 37 43 38Q40 33 40 27Q31 27 29 22Q29 18 34 15Q29 14 29 9z" fill="#2f8a1e" />
      <path d="M33 7Q39 3 42 5L38 10Q33 12 33 7zM47 10Q53 8 57 14L50 15z" fill="#6aa81a" />
    </svg>
  );
}

function Taskbar() {
  return (
    <footer className="flex h-[50px] shrink-0 items-center bg-[linear-gradient(90deg,#cecfd1_0%,#d3d3da_25%,#d6d4e1_40%,#ddd1e0_47%,#d5d4e0_56%,#d6d4e2_64%,#dcd4e2_67%,#d3d3e0_72%,#d5d3de_80%,#dbd4da_86%,#d4d4d8_94%,#d0d1d5_100%)] font-['Open_Sans'] font-normal">
      <div className="flex w-[60px] shrink-0 justify-center">
        <Ic s={20}><path d="M-10 -7.5L-2 -8.8V-.8H-10zM-.8 -9L10 -10.3V-.8H-.8zM-10 .8H-2V8.8L-10 7.6zM-.8 .8H10V10.5L-.8 9z" fill="#000" stroke="none" /></Ic>
      </div>
      <div className="flex h-[49px] w-[429px] shrink-0 items-center self-end border border-[#c4c4c8] bg-white">
        <Ic s={24} c="#111" w={1.6} className="ml-[12px]"><circle cx="2.5" cy="-3" r="6.7" /><path d="M-2.5 1.8L-9.5 9.5" /></Ic>
        <span className="ml-[13px] text-[18px] tracking-[-0.1px] text-[#333]">Type here to search</span>
        <div className="ml-auto pr-[3px]"><EarthDay /></div>
      </div>
      <Cell className="w-[62px]">
        <Ic s={24} c="#111" w={1.4}><path d="M-10 -10.5V-7.5H3V-10.5M-10 11V7.5H3V11M-10 -4.5H3V4.5H-10zM8.5 -10.5V-4M8.5 2V11" /><path d="M7 -3h3v3.500h-3z" fill="#111" stroke="none" /></Ic>
      </Cell>
      <Cell className="ml-[2px] w-[62px]">
        <svg width="30" height="30" viewBox="0 0 30 30" className="block">
          <defs>
            <linearGradient id="e1" x1="0" x2="1" y1="0" y2=".4"><stop offset="0" stopColor="#1a8fd8" /><stop offset=".5" stopColor="#34b9d6" /><stop offset="1" stopColor="#62e36c" /></linearGradient>
            <linearGradient id="e2" x1="0" x2=".5" y1="0" y2="1"><stop offset="0" stopColor="#1b96e3" /><stop offset="1" stopColor="#0a64c4" /></linearGradient>
          </defs>
          <path d="M0 14A15 15 0 0 1 30 13Q30 20 22.500 20Q17 20 18.500 17Q20 14 17 11Q9 5 0 14z" fill="url(#e1)" />
          <path d="M0 15Q2 8 10 8Q15.5 8 18 12Q12 11 10 16Q8 25 18 29.5A15 15 0 0 1 0 15z" fill="url(#e2)" />
          <path d="M13.500 11.500Q9 19 14.500 23.500Q20 27.500 27.500 22.800Q28.500 22.300 28 23.500Q23.500 30 16 30Q8 28 8.500 19Q9.500 13.500 13.500 11.500z" fill="#114f96" />
        </svg>
      </Cell>
      <Cell className="w-[61px]">
        <Ic s={28}><g stroke="none"><path d="M-13.500 -13H-3Q-1.500 -13 -1.500 -11V-8H-13.500z" fill="#dd9a10" /><path d="M-13.500 -8H-3L-1 -10H13.500V13H-13.500z" fill="#fdd365" /><path d="M-9 13V3Q-9 1 -7 1H7Q9 1 9 3V13H4V7H-4V13z" fill="#3f92d8" /></g></Ic>
      </Cell>
      <Cell className="w-[63px]">
        <Ic s={30}><g stroke="none"><path d="M-15 -4.500L0 -14L15 -4.500V0H-15z" fill="#0a53a8" /><path d="M-12 -5H12L0 7z" fill="#f2f5f8" /><path d="M-15 -4.500L1 5L-15 14z" fill="#1fa0e8" /><path d="M15 -4.500V14H-15V13z" fill="#38c0f5" /><path d="M1 4L15 14H-15V12z" fill="#28a8ec" /><path d="M1 4L15 14H-2z" fill="#1b8fdd" /></g></Ic>
      </Cell>
      <Cell className="w-[60px]">
        <Ic s={28}><g stroke="none"><path d="M-13 -6L-7 -8V6L-13 5z" fill="#9aa0a0" /><path d="M-8 -11L13 -9L11 7L-9 4z" fill="#e3e5e5" stroke="#a8acac" /><path d="M-6 -9L11 -7.5L9.5 4.5L-7 2z" fill="#d3e8f2" /><ellipse cx="4" cy="11" rx="7" ry="2.8" fill="#b4b8b8" /><path d="M1 6L6 6.5L7 10H2z" fill="#8f9494" /></g><path d="M-5 0L-2 -1L0 -5L2 1L4 -3L6 2L9 1" stroke="#2f7fae" strokeWidth={1.2} /></Ic>
      </Cell>
      <Cell className="w-[63px]">
        <Ic s={26} c="#3b3b3b">
          <circle r="6.7" strokeWidth={3} />
          {[0, 45, 90, 135, 180, 225, 270, 315].map((a) => (
            <path key={a} d="M-2 -7.500L-1.500 -11.500H1.500L2 -7.500z" fill="#3b3b3b" stroke="none" transform={`rotate(${a + 22})`} />
          ))}
        </Ic>
      </Cell>
      <div className="ml-[6px] flex h-full w-[51px] shrink-0 items-center justify-center border-b-[3px] border-[#0078d7] pt-[3px]">
        <Ic s={30}><g stroke="none"><path d="M0 0L-12.99 -7.5A15 15 0 0 1 12.99 -7.5z" fill="#e33b2e" /><path d="M0 0L12.99 -7.5A15 15 0 0 1 0 15z" fill="#fcc61f" /><path d="M0 0L0 15A15 15 0 0 1 -12.99 -7.5z" fill="#2ba24c" /><path d="M0 -7.5H13L7 0z" fill="#fcc61f" /><path d="M0 0V-7.5H13z" fill="#e33b2e" /><path d="M-12.99 -7.5L-6 3.5L0 3z" fill="#2ba24c" /><path d="M6.5 3.7L0 15L-3 5z" fill="#fcc61f" /><path d="M0 15L-6 4L2 7z" fill="#2ba24c" /><circle r="7.2" fill="#fff" /><circle r="5.8" fill="#2f74ea" /></g></Ic>
      </div>
      <div className="ml-[11px] flex h-full w-[51px] shrink-0 items-center justify-center border-b-[3px] border-[#0078d7] pt-[3px]">
        <div className="flex h-[29px] w-[29px] items-center justify-center rounded-[3px] bg-gradient-to-b from-[#3c7ba1] to-[#1e4e72]">
          <Ic s={26} c="#e6f0f6" w={1.2}>
            <path d="M-5.500 9Q-7.500 8 -8 3Q-8.500 0 -9.500 -3Q-12 -8 -10 -9.500Q-8 -10.500 -6 -9.500Q0 -8 3 0Q4 4 6.500 5Q9.500 6.500 10.500 8.500Q8 7.500 7.500 9L10 11.500" />
            <path d="M-5.500 9Q-3.500 5 -4 3Q-1 8 4.500 11" />
            <path d="M5 -11L7.500 -7L10 -5L11.500 -8L10 -10L8 -9z" fill="#fff" stroke="none" />
          </Ic>
        </div>
      </div>
      <div className="ml-[6px] flex h-full w-[61px] shrink-0 items-center justify-center border-b-[3px] border-[#0078d7] bg-[#eeedf3] pr-px pt-[2px]">
        <div className="flex h-[28px] w-[28px] items-center justify-center bg-[#fbfbfb] shadow-[0_0_2px_#aaa]"><Ic s={26}><TableauMark k={0.95} c="#3f86b0" /></Ic></div>
      </div>
      <div className="ml-auto flex shrink-0 items-center">
        <Ic s={30} c="#111" w={2.2} className="mr-[32px]"><path d="M-13.5 -8.5H11V8.5H-13.5zM11 -6H14V7Q14 8.5 12 8.5H10" /><path d="M-10 -4.5H7.5M1 0H7.5M1 4.5H7.5M-9.5 0H-3V5H-9.5z" strokeWidth={1.8} /></Ic>
        <Ic s={16} c="#111" w={1.4} className="mr-[12px]"><path d="M-7.5 4L0 -4L7.5 4" /></Ic>
        <Ic s={20} c="#111" w={1.2} className="mr-[12px]"><path d="M-5 -4.5H9V5H-6V0" /><path d="M-3 -2.5H7V3H-4V-.5z" fill="#111" stroke="none" /><path d="M10 -1.5V2" strokeWidth={1.6} /><path d="M-9.5 -5.5H-5V-2.5H-9.5z" fill="#111" /><path d="M-8.5 -8V-5M-6 -8V-5M-7.2 -3V0" /></Ic>
        <Ic s={18} c="#111" w={1.2} className="mr-[9px]"><path d="M-7.5 7A15 15 0 0 1 7.5 -7M-3.5 7A11 11 0 0 1 7.5 -3M0 7A7.5 7.5 0 0 1 7.5 .5" /><circle cx="5.5" cy="5.5" r="1.6" fill="#111" stroke="none" /></Ic>
        <Ic s={20} c="#111" w={1.2} className="mr-[10px]"><path d="M-10 -2.5H-7L-3 -6.5V6.5L-7 2.5H-10zM0 -2.5Q2 0 0 2.5M3 -4.5Q6.5 0 3 4.5M6 -7Q11.5 0 6 7" /></Ic>
        <Ic s={30} c="#111" w={1.3}><path d="M-14.5 -8H14.5V8H-14.5z" /><path d="M-11 -4H11.5M-11 0H11.5" strokeDasharray="1.5 2" /><path d="M-11 4.5H-8M-5.5 4.5H5.5M8 4.5H11" /></Ic>
        <div className="ml-[12px] w-[76px] text-center text-[14px] leading-[23px] tracking-[0.02px] text-[#111]">
          <div>11:05</div>
          <div className="whitespace-nowrap">22-04-2023</div>
        </div>
        <Ic s={20} c="#111" w={1.3} className="ml-[24px] mr-[25px]"><path d="M-9.5 -9H9.5V7H4L0 10.5L-4 7H-9.5z" /></Ic>
        <div className="mr-[5px] h-[50px] w-px bg-[#aaa]" />
      </div>
    </footer>
  );
}

export default function App() {
  return (
    <div className="flex h-[1080px] w-[1920px] flex-col overflow-hidden bg-[#f4f4f4] font-['Inter'] font-[350]">
      <div className="font-['Open_Sans'] font-normal">
        <TitleBar />
        <nav className="flex h-[27px] items-center bg-white pl-[10px] text-[14px] text-black">
          {menus.map(([m, w]) => (
            <span key={m} className={w}>{m}</span>
          ))}
        </nav>
      </div>
      <Toolbar />
      <main className="flex h-[860px] shrink-0">
        <DataPane />
        <Cards />
        <Workspace />
      </main>
      <SheetTabs />
      <StatusBar />
      <Taskbar />
    </div>
  );
}
